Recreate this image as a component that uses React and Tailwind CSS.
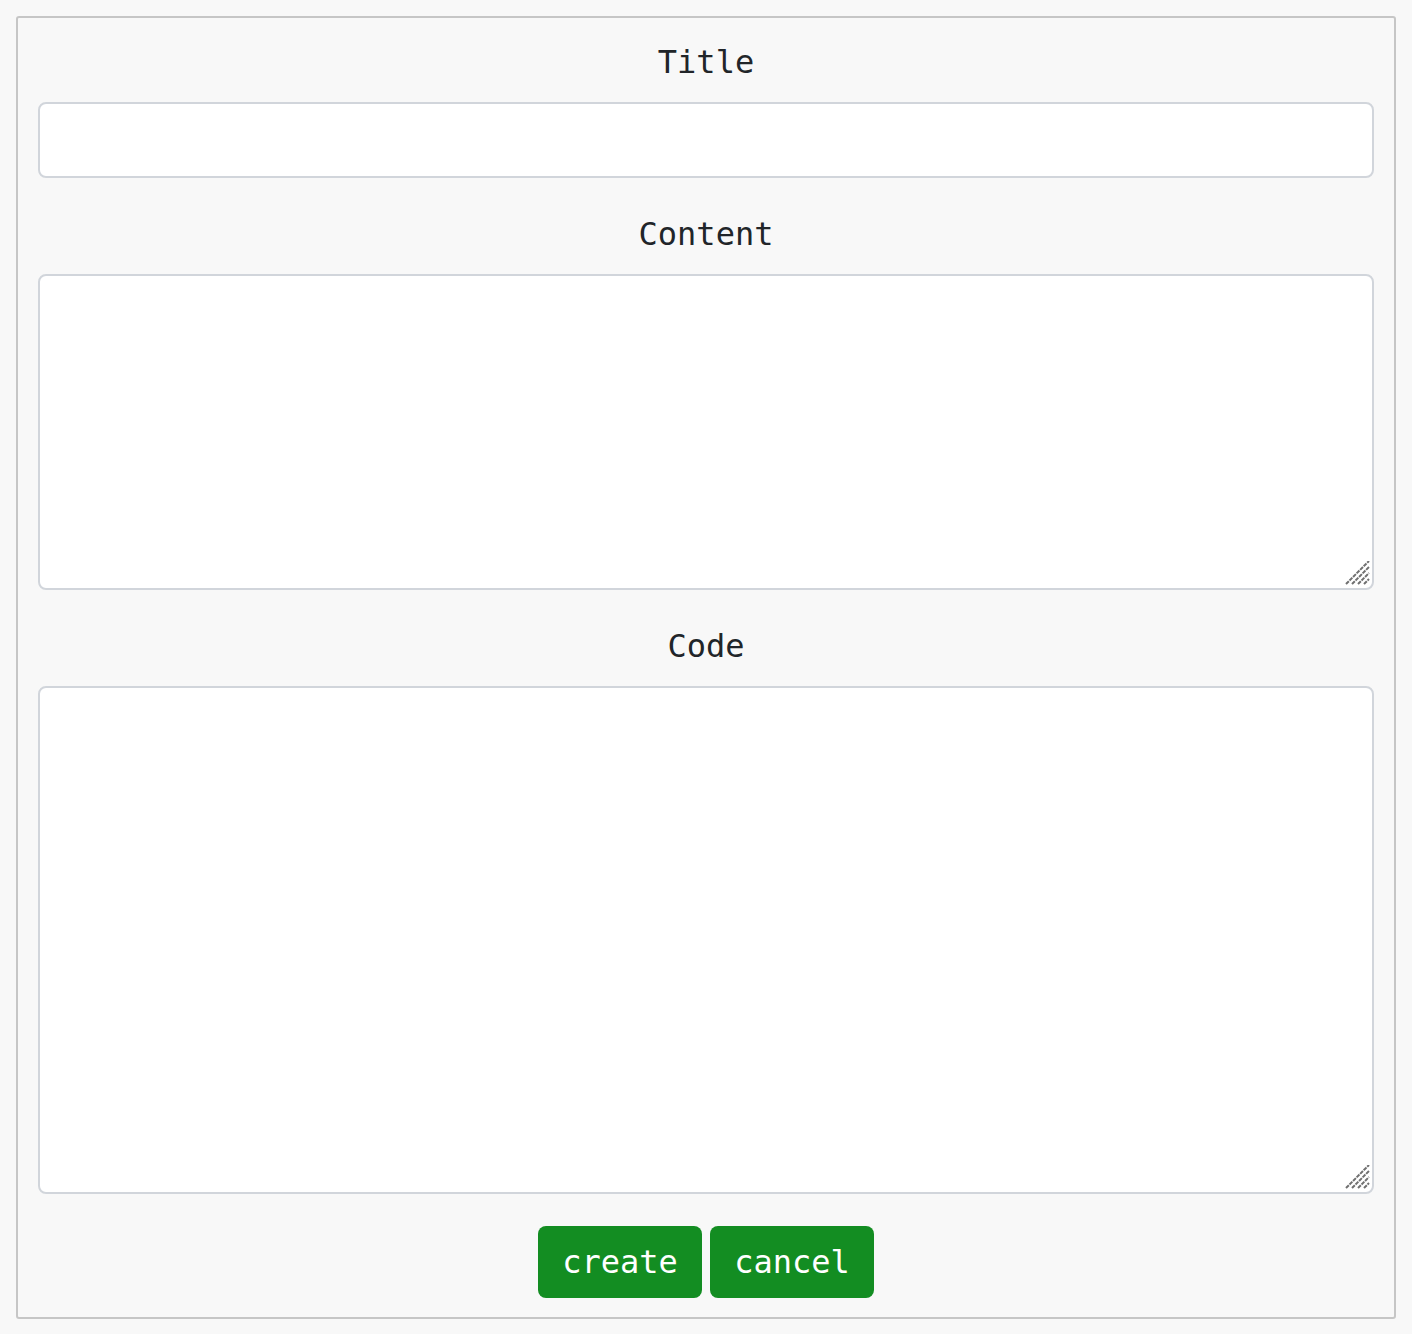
import React, { useState } from 'react';

const mono = "font-['DejaVu_Sans_Mono',monospace]";

function Grip() {
    return (
        <svg className="absolute right-[3px] bottom-[3px] pointer-events-none" width="26" height="26" viewBox="0 0 26 26">
            <g stroke="#707070" strokeWidth="2" strokeDasharray="4 1">
                <line x1="1" y1="23" x2="24" y2="0" />
                <line x1="7" y1="23" x2="24" y2="6" />
                <line x1="13" y1="23" x2="24" y2="12" />
                <line x1="19" y1="23" x2="24" y2="18" />
            </g>
        </svg>
    );
}

function Label({ children, className = '' }) {
    return (
        <label className={`block text-center text-[32px] leading-[48px] text-[#212529] ${className}`}>
            {children}
        </label>
    );
}

export default function App() {
    const [title, setTitle] = useState('');
    const [content, setContent] = useState('');
    const [code, setCode] = useState('');

    return (
        <div className={`min-h-[1334px] bg-[#f8f8f8] p-4 ${mono}`}>
            <form className="border-2 border-[#c6c6c6] rounded-[3px] px-5 pt-5 pb-[19px]">
                <Label>Title</Label>
                <input
                    type="text"
                    value={title}
                    onChange={(e) => setTitle(e.target.value)}
                    className="mt-4 block w-full h-[76px] bg-white border-2 border-[#d1d5db] rounded-lg px-6 text-[32px] outline-none"
                />

                <Label className="mt-8">Content</Label>
                <div className="relative mt-4">
                    <textarea
                        value={content}
                        onChange={(e) => setContent(e.target.value)}
                        className="block w-full h-[316px] bg-white border-2 border-[#d1d5db] rounded-lg px-6 py-3 text-[32px] outline-none resize-none"
                    />
                    <Grip />
                </div>

                <Label className="mt-8">Code</Label>
                <div className="relative mt-4">
                    <textarea
                        value={code}
                        onChange={(e) => setCode(e.target.value)}
                        className="block w-full h-[508px] bg-white border-2 border-[#d1d5db] rounded-lg px-6 py-3 text-[32px] outline-none resize-none"
                    />
                    <Grip />
                </div>

                <div className="mt-8 flex justify-center gap-2">
                    <button type="button" className="w-[164px] h-[72px] rounded-lg bg-[#138d22] text-white text-[32px]">
                        create
                    </button>
                    <button type="button" className="w-[164px] h-[72px] rounded-lg bg-[#138d22] text-white text-[32px]">
                        cancel
                    </button>
                </div>
            </form>
        </div>
    );
}
